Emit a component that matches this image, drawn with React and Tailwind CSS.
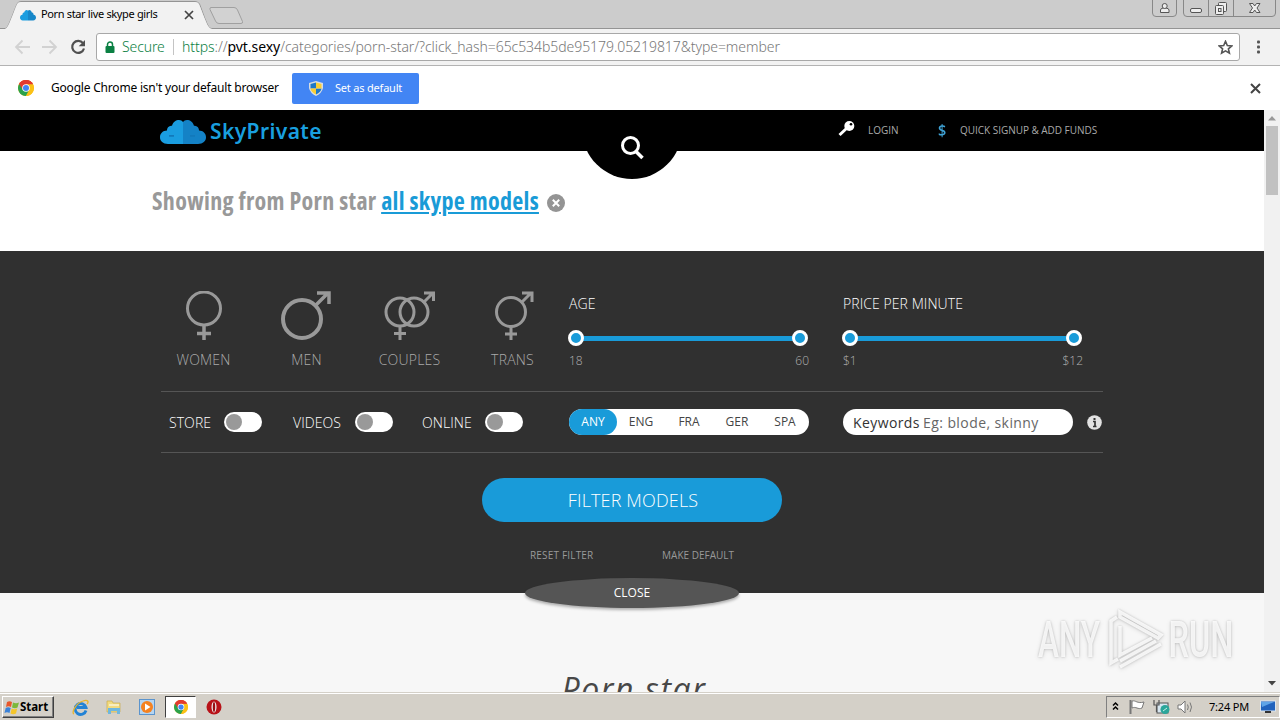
import React, { useState } from 'react';

const SANS = "font-['Open_Sans','Noto_Sans',sans-serif]";
const TAHOMA = "font-['Noto_Sans','DejaVu_Sans',sans-serif]";

const Cloud = ({ className, split }) => (
  <svg className={className} viewBox="0 0 46 26" preserveAspectRatio="none">
    <path d="M8 25 C3 25 0 22 0 18 C0 14 3 11 7 11 C7 7 10 6 12 6 C13 2 16 0 19 0 C21 0 22 1 23 2 V25 Z" fill="#1a9de0" />
    <path d="M38 25 C43 25 46 22 46 18 C46 14 43 11 39 11 C39 7 36 6 34 6 C33 2 30 0 27 0 C25 0 24 1 23 2 V25 Z" fill={split ? '#1482c6' : '#1687c9'} />
    {split && <path d="M9 16.500 h5 M30 16.500 h5" fill="none" stroke="#1279bb" strokeWidth="2" />}
  </svg>
);

const ChromeLogo = ({ className }) => (
  <svg className={className} viewBox="0 0 16 16">
    <circle cx="8" cy="8" r="8" fill="#fbc116" />
    <path d="M8 8 L1.1 4 A8 8 0 0 1 14.9 4 Z" fill="#e33b2e" />
    <path d="M1.1 4 L8 8 L8 16 A8 8 0 0 1 1.1 4 Z" fill="#2ba24c" />
    <path d="M8 8 L4.8 9.8 L8 16 L11.3 9.9 Z" fill="#2ba24c" />
    <path d="M8 16 L11.3 9.9 L8 8 V4 H14.9 A8 8 0 0 1 8 16 Z" fill="#fbc116" />
    <path d="M8 4.3 H15 A8 8 0 0 0 1.1 4 L4.7 9.5 Z" fill="#e33b2e" />
    <circle cx="8" cy="8" r="3.8" fill="#fff" />
    <circle cx="8" cy="8" r="3" fill="#4285f4" />
  </svg>
);

const TabStrip = () => (
  <div className="relative flex h-[29px] shrink-0 items-start bg-[#cccccc]">
    <svg className="absolute inset-0 h-[29px] w-full" width="1280" height="29">
      <path d="M0 28.5 H5 C8 28 9 24 17 4 Q18 1.5 21 1.5 H195 Q198 1.5 199.500 4 C207 24 208 28.500 212 28.500 H1280" fill="none" stroke="#949494" />
      <path d="M5 29 C8 28 9 24 17 4 Q18 2 21 2 H195 Q198 2 199 4 C207 24 208 28 212 29 Z" fill="#f2f2f2" />
      <path d="M211 7.500 H234 Q236.500 7.500 237.500 10 L242.500 21.500 Q243 23.500 241 23.500 H219 Q216.500 23.500 215.500 21 L210 9.500 Q209.500 7.500 211 7.500 Z" fill="#d2d2d2" stroke="#a0a0a0" />
      <path d="M185 11 l8 8 m0 -8 l-8 8" stroke="#444" strokeWidth="1.700" />
    </svg>
    <div className="relative flex items-center pl-5 pt-[6px]">
      <Cloud className="mt-[3px] h-[11px] w-4" />
      <span className="ml-[5px] text-[11px] leading-4 tracking-[-0.35px] text-black">Porn star live skype girls</span>
    </div>
    <div className="relative ml-auto mr-1 flex text-[#555]">
      <svg width="128" height="18" viewBox="0 0 128 18" fill="none" stroke="#888">
        <path d="M4.500 0 V13 Q4.500 16.500 8 16.500 H25 Q28.500 16.500 28.500 13 V0 M35.500 0 V13 Q35.500 16.500 39 16.500 H124 Q127.500 16.500 127.500 13 V0 M60.500 0 V16 M85.500 0 V16" />
        <g stroke="#555" fill="#eee">
          <path d="M12.500 12.500 V10 Q12.500 8.500 15 8 H18 Q21 8.500 21 10 V12.500 Z" />
          <circle cx="16.700" cy="6" r="2.500" />
          <rect x="42.500" y="8.500" width="11" height="4" rx="1.500" />
          <rect x="70.500" y="2.500" width="8" height="9" rx="1" />
          <rect x="67.500" y="5.500" width="8" height="9" rx="1" />
          <rect x="70.500" y="8.500" width="2.500" height="3" />
          <path d="M101.500 3.500 H105 L106.700 6 L108.500 3.500 H112 L109 8 L112 12.500 H108.500 L106.700 10 L105 12.500 H101.500 L104.500 8 Z" />
        </g>
      </svg>
    </div>
  </div>
);

const Toolbar = () => (
  <div className="flex h-[37px] shrink-0 items-center border-b border-[#b3b3b3] bg-[#f2f2f2]">
    <svg className="ml-3 shrink-0" width="76" height="20" fill="none" strokeWidth="1.800">
      <path d="M18 10 H4 M10.500 3.500 L4 10 L10.500 16.500 M30 10 H44 M37.500 3.500 L44 10 L37.500 16.500" stroke="#d2d2d2" />
      <path d="M71 6.200 A6 6 0 1 0 72 11.500" stroke="#505050" strokeWidth="2.200" />
      <path d="M73 3 V9.300 H66.700 Z" fill="#505050" />
    </svg>
    <div className="ml-2 flex h-7 w-[1144px] items-center rounded-[3px] border border-[#a8a8a8] bg-white">
      <svg className="ml-2 shrink-0" width="10" height="13">
        <path d="M2.500 6 V3.500 a2.500 2.500 0 0 1 5 0 V6" fill="none" stroke="#0b8043" strokeWidth="1.500" />
        <rect x="0.500" y="5" width="9" height="7" rx="1" fill="#0b8043" />
      </svg>
      <span className="ml-[7px] w-[42px] whitespace-nowrap text-[14px] font-light leading-5 tracking-[-0.1px] text-[#0b8043]">Secure</span>
      <span className="ml-[9px] h-4 w-px bg-[#c4c4c4]" />
      <span className="ml-2 whitespace-nowrap text-[14px] font-light leading-5 tracking-[-0.06px] text-[#777]">
        <span className="text-[#0b8043]">https</span>://<span className="font-normal text-black">pvt.sexy</span>/categories/porn-star/?click_hash=65c534b5de95179.05219817&amp;type=member
      </span>
      <svg className="ml-auto mr-[6px]" width="15" height="15" viewBox="0 0 15 15">
        <path d="M7.500 1.300 L9.300 5.500 L13.800 5.900 L10.400 8.800 L11.400 13.200 L7.500 10.900 L3.600 13.200 L4.600 8.800 L1.200 5.900 L5.700 5.500 Z" fill="none" stroke="#555" strokeWidth="1.600" />
      </svg>
    </div>
    <svg className="ml-[16px]" width="5" height="14" fill="#555">
      <rect x="1" y="0.500" width="3" height="3" rx="1" />
      <rect x="1" y="5.500" width="3" height="3" rx="1" />
      <rect x="1" y="10.500" width="3" height="3" rx="1" />
    </svg>
  </div>
);

const InfoBar = () => (
  <div className="flex h-[44px] shrink-0 items-center bg-white">
    <ChromeLogo className="ml-[18px] h-4 w-4" />
    <span className="ml-[17px] w-[241px] whitespace-nowrap text-[12px] tracking-[-0.2px] text-black">Google Chrome isn't your default browser</span>
    <button className="flex h-[31px] w-[127px] items-center rounded-[2px] bg-[#4285f4] text-white">
      <svg className="ml-[17px] mr-3" width="14" height="15" viewBox="0 0 14 15">
        <path d="M7 0 L14 2 V7 Q13 12 7 15 Q1 12 0 7 V2 Z" fill="#d8dde0" />
        <path d="M7 1.500 V7.500 H1.500 V3 Z M7 7.500 H12.500 Q12 11 7 13.500 Z" fill="#1e78c8" />
        <path d="M7 1.500 L12.500 3 V7.500 H7 Z M7 7.500 V13.500 Q2 11 1.500 7.500 Z" fill="#f9ce35" />
      </svg>
      <span className="whitespace-nowrap text-[11px] tracking-[-0.2px]">Set as default</span>
    </button>
    <svg className="ml-auto mr-[19px]" width="11" height="11">
      <path d="M1 1 L10 10 M10 1 L1 10" stroke="#444" strokeWidth="2" />
    </svg>
  </div>
);

const SiteHeader = () => (
  <header className="relative flex h-[41px] shrink-0 items-center bg-black text-[10px] text-[#aaa]">
    <Cloud className="ml-[160px] mt-1 h-[25px] w-[46px]" split />
    <span className="ml-1 mt-[1px] text-[21px] font-semibold leading-6 tracking-[0.4px] text-[#199fdf] font-['Noto_Sans',sans-serif]">SkyPrivate</span>
    <div className="absolute left-[582px] top-[-31px] h-[100px] w-[100px] rounded-full bg-black" />
    <svg className="absolute left-[620px] top-[25px]" width="26" height="26" fill="none" stroke="#fff">
      <circle cx="10.500" cy="10.500" r="8" strokeWidth="3" />
      <path d="M16 16.500 L22.500 23" strokeWidth="3.500" />
    </svg>
    <nav className="ml-auto flex w-[426px] items-center">
      <svg className="-mt-[3px]" width="17" height="16" viewBox="0 0 17 16">
        <path d="M1.500 14 L9 7" stroke="#fff" strokeWidth="3" />
        <circle cx="11.300" cy="5" r="5" fill="#fff" />
        <circle cx="13" cy="3.300" r="1.300" fill="#000" />
      </svg>
      <span className="ml-[13px] w-[70px] whitespace-nowrap">LOGIN</span>
      <span className="-mt-px w-[22px] origin-left scale-x-90 text-[16px] font-semibold leading-4 text-[#3fa3d6]">$</span>
      <span className="whitespace-nowrap tracking-[-0.03px]">QUICK SIGNUP &amp; ADD FUNDS</span>
    </nav>
  </header>
);

const Heading = () => (
  <div className="flex h-[100px] shrink-0 items-center bg-white pl-[152px]">
    <h1 className="whitespace-nowrap text-[24px] font-bold leading-8 tracking-[0.32px] text-[#999] [font-stretch:75%]">
      Showing from Porn star <a className="text-[#199bd7] underline decoration-2 underline-offset-2">all skype models</a>
    </h1>
    <svg className="ml-2 mt-1" width="18" height="18">
      <circle cx="9" cy="9" r="9" fill="#949494" />
      <path d="M5.800 5.800 L12.200 12.200 M12.200 5.800 L5.800 12.200" stroke="#fff" strokeWidth="2" />
    </svg>
  </div>
);

const genders = [
  {
    label: 'WOMEN',
    icon: (
      <>
        <circle cx="26" cy="17.500" r="16.500" />
        <path d="M26 34 V49 M19 42.500 H33" strokeWidth="3.500" />
      </>
    ),
  },
  {
    label: 'MEN',
    icon: (
      <>
        <circle cx="21" cy="28" r="19" strokeWidth="4" />
        <path d="M35 14 L47 2 M36 2 H48 V13" strokeWidth="3.500" />
      </>
    ),
  },
  {
    label: 'COUPLES',
    icon: (
      <>
        <circle cx="16" cy="21" r="14" />
        <circle cx="30" cy="21" r="14" />
        <path d="M16 35 V49 M10 42.500 H22 M39 12 L49 2 M40 2 H49.500 V10" />
      </>
    ),
  },
  {
    label: 'TRANS',
    icon: (
      <>
        <circle cx="24" cy="21" r="14.500" />
        <path d="M24 35 V49 M18 43 H30 M34 12 L44 2 M35 2 H45 V11" />
      </>
    ),
  },
];

const Slider = ({ title, min, max }) => (
  <div className="w-[240px] pt-[42px]">
    <p className="text-[14px] font-light leading-[22px] tracking-[0.07px] text-white">{title}</p>
    <div className="-ml-px mt-[15px] flex h-4 w-[240px] items-center">
      <span className="z-10 h-4 w-4 shrink-0 rounded-full border-[3px] border-white bg-[#199bd9]" />
      <span className="-mx-1 h-[5px] flex-1 bg-[#199bd9]" />
      <span className="z-10 h-4 w-4 shrink-0 rounded-full border-[3px] border-white bg-[#199bd9]" />
    </div>
    <div className="mt-[6px] flex justify-between text-[12px] font-light leading-[18px] text-[#b0b0b0]">
      <span>{min}</span>
      <span>{max}</span>
    </div>
  </div>
);

const Toggle = ({ label, width }) => {
  const [on, setOn] = useState(false);
  return (
    <div className={`flex items-center ${width}`}>
      <span className="flex-1 whitespace-nowrap text-[14px] font-light tracking-[0.07px] text-white">{label}</span>
      <button
        onClick={() => setOn(!on)}
        className={`flex h-5 w-[38px] items-center rounded-full bg-white px-[2px] ${on ? 'justify-end' : ''}`}
      >
        <span className={`h-4 w-4 rounded-full ${on ? 'bg-[#199bd9]' : 'bg-[#999]'}`} />
      </button>
    </div>
  );
};

const FilterPanel = () => {
  const [lang, setLang] = useState('ANY');
  return (
    <section className="relative z-10 flex h-[342px] shrink-0 flex-col bg-[#303030] pl-[161px]">
      <div className="grid h-[141px] w-[942px] shrink-0 grid-cols-[408px_274px_260px] border-b border-[#555]">
        <div className="-ml-[9px] flex pt-10">
          {genders.map((g) => (
            <div key={g.label} className="flex w-[103px] flex-col items-center">
              <svg width="52" height="50" fill="none" stroke="#999" strokeWidth="3">
                {g.icon}
              </svg>
              <span className="mt-[9px] text-[14px] font-light leading-5 tracking-[0.2px] text-[#aaa]">{g.label}</span>
            </div>
          ))}
        </div>
        <Slider title="AGE" min="18" max="60" />
        <Slider title="PRICE PER MINUTE" min="$1" max="$12" />
      </div>

      <div className="grid h-[61px] w-[942px] shrink-0 grid-cols-[408px_274px_260px] items-center border-b border-[#555]">
        <div className="flex pl-2">
          <Toggle label="STORE" width="w-[93px] mr-[31px]" />
          <Toggle label="VIDEOS" width="w-[100px] mr-[29px]" />
          <Toggle label="ONLINE" width="w-[101px]" />
        </div>
        <div className="flex h-[26px] w-[240px] rounded-full bg-white text-[12px] text-[#444]">
          {['ANY', 'ENG', 'FRA', 'GER', 'SPA'].map((l) => (
            <button
              key={l}
              onClick={() => setLang(l)}
              className={`w-12 rounded-full ${lang === l ? 'bg-[#199bd9] text-white' : ''}`}
            >
              {l}
            </button>
          ))}
        </div>
        <div className="flex items-center">
          <div className="flex h-[26px] w-[230px] items-center whitespace-nowrap rounded-full bg-white pl-[10px] text-[14px]">
            <span className="w-[70px] tracking-[0.4px] text-[#333]">Keywords</span>
            <span className="pt-px tracking-[0.42px] text-[#666]">Eg: blode, skinny</span>
          </div>
          <svg className="ml-[14px] mt-[1px]" width="15" height="15">
            <circle cx="7.500" cy="7.500" r="7.300" fill="#e2e2e2" />
            <path d="M6 6.500 H8 V11 M6 11.500 H9.500" stroke="#333" strokeWidth="1.700" fill="none" />
            <rect x="6.500" y="3" width="2" height="2" fill="#333" />
          </svg>
        </div>
      </div>

      <div className="flex w-[942px] shrink-0 flex-col items-center pt-[25px]">
        <button className="h-11 w-[300px] rounded-full bg-[#199bd9] pl-[2px] text-[18px] font-light tracking-[0.15px] text-white">FILTER MODELS</button>
        <div className="mt-6 flex w-[204px] justify-between whitespace-nowrap text-[10px] leading-[18px] text-[#999]">
          <span className="tracking-[0.18px]">RESET FILTER</span>
          <span>MAKE DEFAULT</span>
        </div>
        <button className="relative mt-[14px] h-[30px] w-[214px] rounded-[50%] bg-[#555] text-[12px] text-white shadow-[0_2px_3px_rgba(0,0,0,0.3)]">
          CLOSE
        </button>
      </div>
    </section>
  );
};

const Watermark = () => (
  <div className="absolute left-[1038px] top-[498px] flex h-[64px] items-center text-white/80 [filter:drop-shadow(0_0_1px_rgba(0,0,0,0.22))_drop-shadow(0_1px_2px_rgba(0,0,0,0.15))]">
    <span className="block w-[70px] origin-left scale-x-[0.63] text-[50px] font-medium leading-[60px] font-['Roboto',sans-serif]">ANY</span>
    <svg width="58" height="62" fill="none" stroke="currentColor" strokeWidth="3.500">
      <path d="M12 3 L53 26 L50 29 L12 8 Z M3 46 V12 L9 8 M3 46 V54 L10 50 M12 17 V46 L44 29 M12 58 L53 35 M12 52 L48 32" />
    </svg>
    <span className="block w-[64px] origin-left scale-x-[0.65] pl-1 text-[50px] font-medium leading-[60px] font-['Roboto',sans-serif]">RUN</span>
  </div>
);

const Scrollbar = () => (
  <div className="flex w-4 shrink-0 flex-col items-center bg-[#f1f1f1]">
    <svg className="shrink-0" width="16" height="15"><path d="M4 10.500 L8 6 L12 10.500 Z" fill="#999" /></svg>
    <div className="mt-px h-[69px] w-3 bg-[#c1c1c1]" />
    <svg className="mt-auto shrink-0" width="16" height="17"><path d="M4 6 H12 L8 10.500 Z" fill="#444" /></svg>
  </div>
);

const Taskbar = () => (
  <footer className="flex h-7 shrink-0 items-center border-t border-[#d4d0c8] bg-[#d4d0c8] pt-px shadow-[inset_0_1px_0_#fff]">
    <button className="ml-[2px] flex h-[22px] w-[52px] items-center border border-b-[#404040] border-l-white border-r-[#404040] border-t-white text-[11.500px] font-bold text-black shadow-[inset_-1px_-1px_0_#808080]">
      <svg className="ml-[1px] shrink-0" width="16" height="15">
        <path d="M3 2 Q5.500 0.500 8 2 L7 7 Q4.500 5.500 2 7 Z" fill="#e8572a" />
        <path d="M9 2.500 Q12 4 15 2.500 L13.500 7.500 Q11 9 8 7.500 Z" fill="#7cb83a" />
        <path d="M1.700 8 Q4 6.500 6.700 8 L5.500 13 Q3 11.500 0.500 13 Z" fill="#3b82d8" />
        <path d="M7.700 8.500 Q10 10 13.200 8.500 L12 13.500 Q9 15 6.500 13.500 Z" fill="#f5c62b" />
      </svg>
      <span className="tracking-[-0.05px]">Start</span>
    </button>
    <div className="ml-[9px] flex items-center">
      <div className="flex w-[34px] justify-center">
        <svg width="17" height="17" fill="none">
          <path d="M14 11.500 A5.500 5.500 0 1 1 14 8.500 H5" stroke="#2383d5" strokeWidth="2.800" />
          <path d="M2 15 C-1 14 4 4 11 2 C16 0 17 3 15 5" stroke="#e7b52e" strokeWidth="1.300" />
        </svg>
      </div>
      <div className="flex w-[33px] justify-center">
        <svg width="16" height="16">
          <path d="M1 2 H6 L7 4 H14 V13 H1 Z" fill="#f2db80" stroke="#c9ac4d" strokeWidth="0.700" />
          <path d="M3 6 H13" stroke="#fff" />
          <path d="M2 15 V9 H14 V15 H11 V12 H5 V15 Z" fill="#6fb7de" />
        </svg>
      </div>
      <div className="flex w-[34px] justify-center">
        <svg width="16" height="16">
          <rect x="0.500" y="0.500" width="15" height="15" fill="#b5d5f1" stroke="#5b94cd" />
          <circle cx="8" cy="8" r="6" fill="#f58220" />
          <path d="M6 4.500 L11.500 8 L6 11.500 Z" fill="#fff" />
        </svg>
      </div>
      <div className="ml-px flex h-[22px] w-[31px] items-center justify-center border border-b-white border-l-[#404040] border-r-white border-t-[#404040] bg-white">
        <ChromeLogo className="h-[14px] w-[14px]" />
      </div>
      <div className="ml-[2px] flex w-[32px] justify-center">
        <svg width="16" height="16">
          <circle cx="8" cy="8" r="7.500" fill="#b81218" />
          <ellipse cx="8" cy="8" rx="2.500" ry="5.500" fill="#eee" />
          <ellipse cx="8" cy="8" rx="1.200" ry="5" fill="#9a0d12" />
        </svg>
      </div>
    </div>
    <div className="ml-auto flex h-[22px] w-[174px] items-center border border-b-white border-l-[#808080] border-r-white border-t-[#808080] text-[11px] text-black">
      <svg className="ml-[5px]" width="82" height="18" fill="none">
        <path d="M1 7.500 L3.500 5 L6 7.500 M1 11.500 L3.500 9 L6 11.500" stroke="#000" strokeWidth="1.500" />
        <path d="M18.500 2 V16" stroke="#777" strokeWidth="2" />
        <path d="M20 3 C24 2 25 6 32 4 L30 10 C26 12 24 8 20 10 Z" fill="#fff" stroke="#777" />
        <rect x="45" y="5" width="11" height="10" fill="#d7e6f0" stroke="#555" />
        <path d="M42 2 V7 H47 V2 M44.500 7 V14" stroke="#555" strokeWidth="1.200" />
        <circle cx="53" cy="11.500" r="4.500" fill="#2ba69a" />
        <path d="M51 13 L55 10" stroke="#c9f2e8" />
        <path d="M66 7 H69 L73 3 V15 L69 11 H66 Z" fill="#fff" stroke="#777" />
        <path d="M75.500 6.500 Q77 9 75.500 12 M78 4.500 Q81 9 78 14" stroke="#777" />
      </svg>
      <span className="ml-[15px] w-[41px] whitespace-nowrap tracking-[-0.2px]">7:24 PM</span>
      <svg className="ml-[10px]" width="16" height="14">
        <rect x="0.500" y="1" width="15" height="10" fill="#2163bd" stroke="#dce6ef" />
        <path d="M1 2 H14 L2 7 Z" fill="#5fa5e8" />
        <rect x="5" y="11" width="6" height="2" fill="#333" />
      </svg>
    </div>
  </footer>
);

const App = () => (
  <div className={`flex h-[720px] w-[1280px] flex-col overflow-hidden ${TAHOMA}`}>
    <TabStrip />
    <Toolbar />
    <InfoBar />
    <div className="flex h-[582px] shrink-0 overflow-hidden">
      <main className={`relative flex flex-1 flex-col overflow-hidden bg-[#f7f7f7] ${SANS}`}>
        <SiteHeader />
        <Heading />
        <FilterPanel />
        <h2 className="mt-[74px] shrink-0 whitespace-nowrap pl-[4px] text-center text-[32px] italic leading-[44px] tracking-[1.6px] text-[#484848]">Porn star</h2>
        <Watermark />
      </main>
      <Scrollbar />
    </div>
    <Taskbar />
  </div>
);

export default App;
